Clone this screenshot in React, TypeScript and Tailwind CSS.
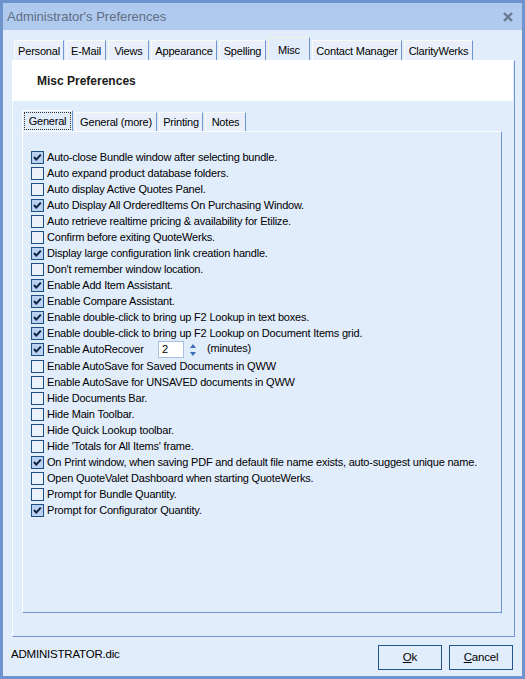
import React from 'react';

const FONT = { fontFamily: '"Liberation Sans", Arial, sans-serif' };

const topTabs = [
  { label: 'Personal', w: 'w-[50px]' },
  { label: 'E-Mail', w: 'w-[40px]' },
  { label: 'Views', w: 'w-[41px]' },
  { label: 'Appearance', w: 'w-[66px]' },
  { label: 'Spelling', w: 'w-[47px]' },
  { label: 'Misc', w: 'w-[42px]', active: true },
  { label: 'Contact Manager', w: 'w-[90px]' },
  { label: 'ClarityWerks', w: 'w-[69px]' },
];

const innerTabs = [
  { label: 'General', w: 'w-[51px]', active: true },
  { label: 'General (more)', w: 'w-[82px]' },
  { label: 'Printing', w: 'w-[44px]' },
  { label: 'Notes', w: 'w-[41px]' },
];

const options: { label: string; checked: boolean; spin?: boolean }[] = [
  { label: 'Auto-close Bundle window after selecting bundle.', checked: true },
  { label: 'Auto expand product database folders.', checked: false },
  { label: 'Auto display Active Quotes Panel.', checked: false },
  { label: 'Auto Display All OrderedItems On Purchasing Window.', checked: true },
  { label: 'Auto retrieve realtime pricing & availability for Etilize.', checked: false },
  { label: 'Confirm before exiting QuoteWerks.', checked: false },
  { label: 'Display large configuration link creation handle.', checked: true },
  { label: "Don't remember window location.", checked: false },
  { label: 'Enable Add Item Assistant.', checked: true },
  { label: 'Enable Compare Assistant.', checked: true },
  { label: 'Enable double-click to bring up F2 Lookup in text boxes.', checked: true },
  { label: 'Enable double-click to bring up F2 Lookup on Document Items grid.', checked: true },
  { label: 'Enable AutoRecover', checked: true, spin: true },
  { label: 'Enable AutoSave for Saved Documents in QWW', checked: false },
  { label: 'Enable AutoSave for UNSAVED documents in QWW', checked: false },
  { label: 'Hide Documents Bar.', checked: false },
  { label: 'Hide Main Toolbar.', checked: false },
  { label: 'Hide Quick Lookup toolbar.', checked: false },
  { label: "Hide 'Totals for All Items' frame.", checked: false },
  { label: 'On Print window, when saving PDF and default file name exists, auto-suggest unique name.', checked: true },
  { label: 'Open QuoteValet Dashboard when starting QuoteWerks.', checked: false },
  { label: 'Prompt for Bundle Quantity.', checked: false },
  { label: 'Prompt for Configurator Quantity.', checked: true },
];

function CheckBox({ checked }: { checked: boolean }) {
  return (
    <div
      className={`w-[13px] h-[13px] shrink-0 border border-[#1d4f85] flex items-center justify-center ${
        checked ? 'bg-[#bad1f2]' : 'bg-[#eaf1fb]'
      }`}
    >
      {checked && (
        <svg width="11" height="11" viewBox="0 0 11 11">
          <polyline points="2,5 4.3,7.6 8.8,2.6" fill="none" stroke="#10213d" strokeWidth="2" />
        </svg>
      )}
    </div>
  );
}

function OptionRow({ label, checked, spin }: { label: string; checked: boolean; spin?: boolean }) {
  return (
    <div className={`flex items-center ${spin ? 'h-[17px]' : 'h-[16px]'}`}>
      <CheckBox checked={checked} />
      {spin ? (
        <>
          <span className="ml-[3px] w-[111px]">{label}</span>
          <div className="w-[26px] h-[17px] bg-white border border-[#a9bfdf] pl-[3px] flex items-center">2</div>
          <div className="ml-[6px] flex flex-col gap-[4px]">
            <svg width="6" height="4" viewBox="0 0 6 4">
              <polygon points="3,0 6,4 0,4" fill="#3d6cb3" />
            </svg>
            <svg width="6" height="4" viewBox="0 0 6 4">
              <polygon points="0,0 6,0 3,4" fill="#3d6cb3" />
            </svg>
          </div>
          <span className="ml-[11px] -mt-[3px]">(minutes)</span>
        </>
      ) : (
        <span className="ml-[3px] whitespace-nowrap">{label}</span>
      )}
    </div>
  );
}

export default function App() {
  return (
    <div
      className="w-[525px] h-[679px] bg-[#e2edfc] border-[3px] border-[#6f93cc] flex flex-col text-[11px] tracking-[-0.2px] text-black"
      style={FONT}
    >
      {/* Title bar */}
      <div className="h-[27px] shrink-0 bg-[#b0c9ee] flex items-center justify-between pl-[4px] pr-[9px]">
        <span className="text-[13px] text-[#5e6e85] tracking-normal">Administrator's Preferences</span>
        <svg width="10" height="10" viewBox="0 0 10 10">
          <path d="M1 1 L9 9 M9 1 L1 9" stroke="#6b7b92" strokeWidth="2.4" />
        </svg>
      </div>

      {/* Body */}
      <div className="flex-1 flex flex-col pl-[9px] pr-[7px] pt-[7px]">
        {/* Top tab strip */}
        <div className="h-[23px] flex items-end gap-[2px] pl-[2px]">
          {topTabs.map((t) =>
            t.active ? (
              <div
                key={t.label}
                className={`${t.w} h-[23px] bg-[#e2edfc] border-t border-l border-[#f4f2e4] border-r border-r-[#6f96d2] flex justify-center pt-[4px]`}
              >
                {t.label}
              </div>
            ) : (
              <div
                key={t.label}
                className={`${t.w} h-[20px] bg-[#e9f0fb] border-t border-l border-[#fbfbf6] border-r border-r-[#6f96d2] flex justify-center items-center pt-[2px]`}
              >
                {t.label}
              </div>
            )
          )}
        </div>

        {/* Tab panel */}
        <div className="h-[577px] flex flex-col border-t border-l border-white border-r border-b border-r-[#6f96d2] border-b-[#6f96d2]">
          <div className="h-[40px] bg-white mr-[1px] flex items-center pl-[24px]">
            <span className="text-[12px] font-bold tracking-normal text-[#1a1a1a]">Misc Preferences</span>
          </div>

          <div className="pt-[9px] pl-[9px] pr-[12px] flex flex-col">
            {/* Inner tab strip */}
            <div className="h-[21px] flex items-end gap-[2px]">
              {innerTabs.map((t) =>
                t.active ? (
                  <div
                    key={t.label}
                    className={`${t.w} h-[21px] bg-[#e2edfc] border-t border-l border-white border-r border-r-[#6f96d2] p-[1px]`}
                  >
                    <div className="h-full border border-dotted border-[#333] flex items-center justify-center">
                      {t.label}
                    </div>
                  </div>
                ) : (
                  <div
                    key={t.label}
                    className={`${t.w} h-[19px] bg-[#e9f0fb] border-t border-l border-[#fbfbf6] border-r border-r-[#6f96d2] flex items-center justify-center pt-[1px]`}
                  >
                    {t.label}
                  </div>
                )
              )}
            </div>

            {/* Inner panel */}
            <div className="h-[482px] border-t border-l border-white border-r border-b border-r-[#6f96d2] border-b-[#6f96d2] pt-[17px] pl-[8px] flex flex-col">
              {options.map((o) => (
                <OptionRow key={o.label} label={o.label} checked={o.checked} spin={o.spin} />
              ))}
            </div>
          </div>
        </div>

        {/* Footer */}
        <div className="flex-1 flex items-start justify-between pt-[8px] pr-[2px]">
          <span className="-ml-[1px] mt-[1px] text-[11.5px]">ADMINISTRATOR.dic</span>
          <div className="flex gap-[7px]">
            <button className="w-[64px] h-[25px] border border-[#25548f] bg-[#e2edfc] text-[11.5px]">
              <span className="underline">O</span>k
            </button>
            <button className="w-[64px] h-[25px] border border-[#25548f] bg-[#e2edfc] text-[11.5px]">
              <span className="underline">C</span>ancel
            </button>
          </div>
        </div>
      </div>
    </div>
  );
}
